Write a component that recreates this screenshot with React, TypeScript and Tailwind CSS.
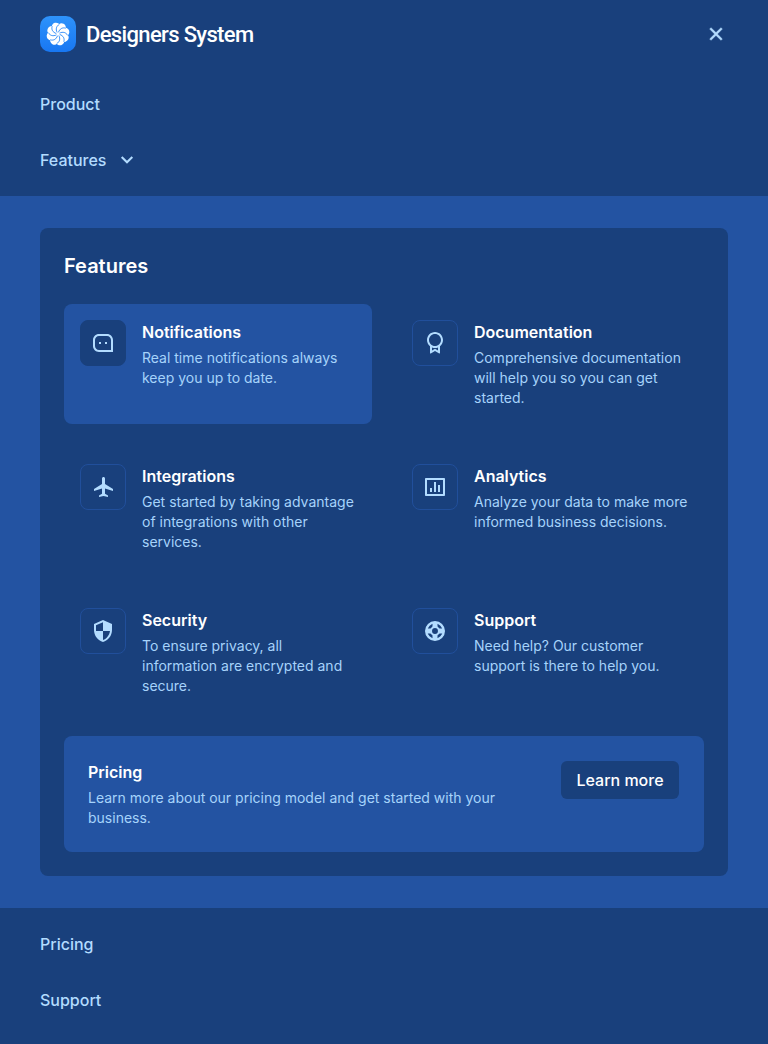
import type { ComponentType } from "react";
import { RiAwardLine, RiBarChartBoxLine, RiCloseLine, RiMessage3Line, RiPlaneFill } from "react-icons/ri";
import { MdSecurity } from "react-icons/md";

interface Feature {
  title: string;
  text: string;
  icon: ComponentType<{ size?: number }>;
  active?: boolean;
}

function Lifebuoy({ size = 24 }: { size?: number }) {
  return (
    <svg width={size} height={size} viewBox="0 0 24 24" fill="none" stroke="currentColor" aria-hidden="true">
      <circle cx="12" cy="12" r="8.8" strokeWidth="2.4" />
      <circle cx="12" cy="12" r="4" strokeWidth="2.1" />
      <path d="M12 3.5V8.5M12 15.5V20.5M3.5 12H8.5M15.5 12H20.5" strokeWidth="5" />
    </svg>
  );
}

const features: Feature[] = [
  { title: "Notifications", text: "Real time notifications always keep you up to date.", icon: RiMessage3Line, active: true },
  { title: "Documentation", text: "Comprehensive documentation will help you so you can get started.", icon: RiAwardLine },
  { title: "Integrations", text: "Get started by taking advantage of integrations with other services.", icon: RiPlaneFill },
  { title: "Analytics", text: "Analyze your data to make more informed business decisions.", icon: RiBarChartBoxLine },
  { title: "Security", text: "To ensure privacy, all information are encrypted and secure.", icon: MdSecurity },
  { title: "Support", text: "Need help? Our customer support is there to help you.", icon: Lifebuoy },
];

const petals = [0, 45, 90, 135, 180, 225, 270, 315];

function Logo() {
  return (
    <svg width="36" height="36" viewBox="0 0 36 36" aria-hidden="true">
      <defs>
        <linearGradient id="logo-bg" x1="0" y1="0" x2="0" y2="1">
          <stop offset="0" stopColor="#2e93fb" />
          <stop offset="1" stopColor="#1877f2" />
        </linearGradient>
      </defs>
      <rect width="36" height="36" rx="10" fill="url(#logo-bg)" />
      <g transform="rotate(-16 18 18)">
        <g fill="#fff">
          {petals.map((a) => (
            <circle key={a} cx="18" cy="10.8" r="4.4" transform={`rotate(${a} 18 18)`} />
          ))}
          <circle cx="18" cy="18" r="8" />
        </g>
        <g fill="none" stroke="#2385f7" strokeWidth="0.8" strokeLinecap="round">
          {petals.map((a) => (
            <path key={a} d="M17.5 15.9C17 12.6 18.4 10 21.6 9.2" transform={`rotate(${a} 18 18)`} />
          ))}
        </g>
      </g>
    </svg>
  );
}

function FeatureCard({ title, text, icon: Icon, active }: Feature) {
  return (
    <a href="#" className={`flex h-[120px] gap-4 rounded-lg p-4 ${active ? "bg-[#2353a2]" : ""}`}>
      <span
        className={`flex size-[46px] shrink-0 items-center justify-center rounded-lg border text-[#b3dcff] ${
          active ? "border-[#19407c] bg-[#19407c]" : "border-[#214f9b]"
        }`}
      >
        <Icon size={24} />
      </span>
      <span className="min-w-0">
        <span className="block text-base leading-6 font-semibold text-white">{title}</span>
        <span className="mt-1 block text-sm leading-5 text-[#a6d3fb]">{text}</span>
      </span>
    </a>
  );
}

export default function App() {
  return (
    <div className="flex min-h-[1044px] flex-col bg-[#19407c] font-[Inter,sans-serif] text-[#b3dcff]">
      <header className="flex h-[68px] items-center justify-between px-10">
        <div className="flex items-center gap-2.5">
          <Logo />
          <span className="pt-0.5 font-[Roboto,sans-serif] text-[22px] leading-7 font-medium tracking-[-0.65px] text-white">Designers System</span>
        </div>
        <button type="button" aria-label="Close">
          <RiCloseLine size={24} className="stroke-[0.4]" />
        </button>
      </header>
      <nav className="flex flex-col pt-2 font-medium">
        <a href="#" className="flex h-14 items-center px-10">Product</a>
        <a href="#" className="flex h-14 items-center gap-[9px] px-10">
          Features
          <svg width="24" height="24" viewBox="0 0 24 24" fill="none" stroke="currentColor" strokeWidth="2.1" aria-hidden="true">
            <path d="M6.7 9.1 12 14.3 17.3 9.1" />
          </svg>
        </a>
        <div className="mt-2 bg-[#2353a2] px-10 py-8 font-normal">
          <section className="rounded-lg bg-[#19407c] p-6">
            <h2 className="text-xl leading-7 font-semibold text-white">Features</h2>
            <div className="mt-6 grid grid-cols-2 gap-6">
              {features.map((f) => (
                <FeatureCard key={f.title} {...f} />
              ))}
            </div>
            <div className="mt-6 flex items-start justify-between rounded-lg bg-[#2353a2] p-6">
              <div className="w-[420px]">
                <h3 className="text-base leading-6 font-semibold text-white">Pricing</h3>
                <p className="mt-1 text-sm leading-5 text-[#a6d3fb]">
                  Learn more about our pricing model and get started with your business.
                </p>
              </div>
              <button type="button" className="mt-px mr-px h-[38px] w-[118px] rounded-md bg-[#19407c] text-base font-medium text-white">
                Learn more
              </button>
            </div>
          </section>
        </div>
        <a href="#" className="mt-2 flex h-14 items-center px-10">Pricing</a>
        <a href="#" className="flex h-14 items-center px-10">Support</a>
      </nav>
    </div>
  );
}
